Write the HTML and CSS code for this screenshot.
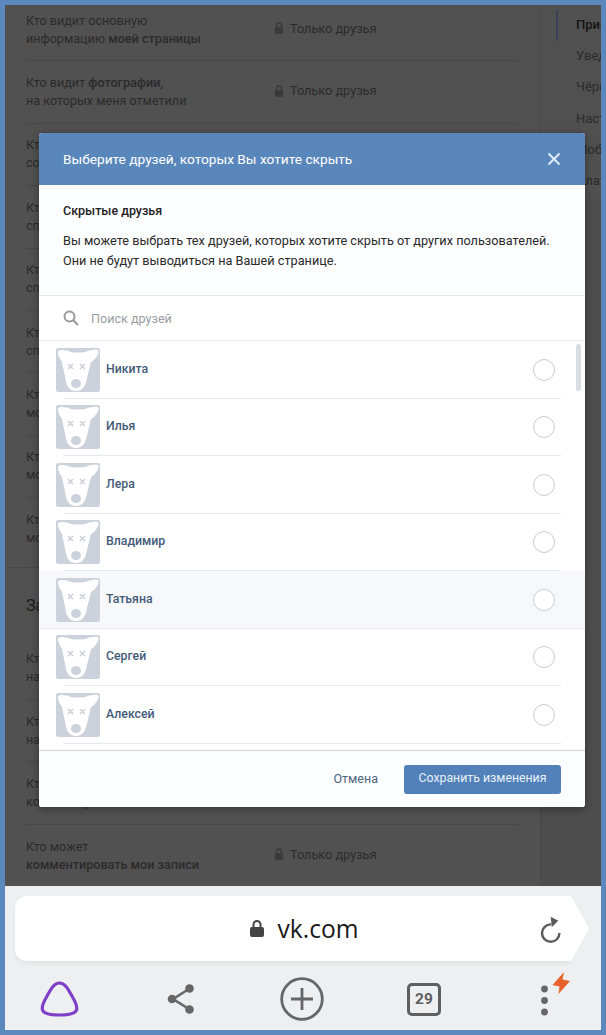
FILE: index.html
```html
<!DOCTYPE html>
<html lang="ru">
<head>
  <meta charset="UTF-8">
  <meta name="viewport" content="width=device-width, initial-scale=1">
  <title>Скрытые друзья</title>
  <link rel="stylesheet" href="styles.css">
</head>
<body>
  <svg class="defs" width="0" height="0">
    <symbol id="dog" viewBox="0 0 44 44">
      <rect width="44" height="44" rx="2" fill="#ccd2db"/>
      <path d="M2 6Q1 2 6 2Q11 2 15 4Q22 5 29 4Q34 1.500 40 1.500Q44 2 42 6Q40 11 35 14L31 30Q29 43 20 43Q11 43 9.500 31L6 14Q3 10 2 6Z" fill="#fff"/>
      <ellipse cx="20" cy="35.500" rx="5" ry="4.500" fill="#ccd2db"/>
      <path d="M12 16l5 5m0-5l-5 5M24 16l5 5m0-5l-5 5" stroke="#ccd2db" stroke-width="1.600"/>
    </symbol>
    <symbol id="lock" viewBox="0 0 12 14">
      <path d="M3 6V4a3 3 0 0 1 6 0v2" fill="none" stroke="currentColor" stroke-width="1.600"/>
      <rect x="1" y="6" width="10" height="8" rx="1.500" fill="currentColor"/>
    </symbol>
  </svg>

  <div class="frame">
    <div class="screen">
      <div class="settings">
        <div class="main">
          <div class="section section-first">
            <div class="row"><p>Кто видит основную<br>информацию <b>моей страницы</b></p><span class="value"><svg><use href="#lock"/></svg>Только друзья</span></div>
            <div class="row"><p>Кто видит <b>фотографии,</b><br>на которых меня отметили</p><span class="value"><svg><use href="#lock"/></svg>Только друзья</span></div>
            <div class="row"><p>Кто видит<br>сохранённые фотографии</p></div>
            <div class="row"><p>Кто видит<br>список моих групп</p></div>
            <div class="row"><p>Кто видит<br>список моих аудиозаписей</p></div>
            <div class="row"><p>Кто видит<br>список моих подарков</p></div>
            <div class="row"><p>Кто видит<br>мою геолокацию</p></div>
            <div class="row"><p>Кто видит<br>мои истории</p></div>
            <div class="row"><p>Кто видит<br>мои сообщества</p></div>
          </div>
          <div class="section section-second">
            <h3>Записи на странице</h3>
            <div class="row"><p>Кто видит<br>надписи на странице</p></div>
            <div class="row"><p>Кто может<br>написать на странице</p></div>
            <div class="row"><p>Кто видит<br>комментарии к записям</p></div>
            <div class="row"><p>Кто может<br><b>комментировать мои записи</b></p><span class="value"><svg><use href="#lock"/></svg>Только друзья</span></div>
          </div>
        </div>
        <div class="side">
          <ul>
            <li class="active">Приватность</li>
            <li>Уведомления</li>
            <li>Чёрный список</li>
            <li>Настройки</li>
            <li>Мобильные</li>
            <li>Платежи</li>
          </ul>
        </div>
      </div>

      <div class="modal">
        <div class="modal-head">
          <span>Выберите друзей, которых Вы хотите скрыть</span>
          <svg class="close" width="14" height="14" viewBox="0 0 14 14"><path d="M1.500 1.500l11 11m0-11l-11 11" stroke="#e4eef8" stroke-width="1.800"/></svg>
        </div>
        <div class="intro">
          <h4>Скрытые друзья</h4>
          <p>Вы можете выбрать тех друзей, которых хотите скрыть от других пользователей.<br>Они не будут выводиться на Вашей странице.</p>
        </div>
        <div class="search">
          <svg width="16" height="16" viewBox="0 0 16 16"><circle cx="6.500" cy="6.500" r="5" fill="none" stroke="#9a9a9a" stroke-width="2"/><path d="M10 10l5 5" stroke="#9a9a9a" stroke-width="2.200"/></svg>
          <span>Поиск друзей</span>
        </div>
        <div class="friends">
          <div class="friend"><svg class="ava"><use href="#dog"/></svg><span class="name">Никита</span><i class="radio"></i></div>
          <div class="friend"><svg class="ava"><use href="#dog"/></svg><span class="name">Илья</span><i class="radio"></i></div>
          <div class="friend"><svg class="ava"><use href="#dog"/></svg><span class="name">Лера</span><i class="radio"></i></div>
          <div class="friend"><svg class="ava"><use href="#dog"/></svg><span class="name">Владимир</span><i class="radio"></i></div>
          <div class="friend hover"><svg class="ava"><use href="#dog"/></svg><span class="name">Татьяна</span><i class="radio"></i></div>
          <div class="friend"><svg class="ava"><use href="#dog"/></svg><span class="name">Сергей</span><i class="radio"></i></div>
          <div class="friend"><svg class="ava"><use href="#dog"/></svg><span class="name">Алексей</span><i class="radio"></i></div>
          <div class="scroll"></div>
        </div>
        <div class="modal-foot">
          <span class="cancel">Отмена</span>
          <button type="button">Сохранить изменения</button>
        </div>
      </div>
    </div>

    <div class="browser">
      <div class="urlbar">
        <div class="url">
          <svg width="14" height="17" viewBox="0 0 14 17"><path d="M3.500 7V4.500a3.500 3.500 0 0 1 7 0V7" fill="none" stroke="#444" stroke-width="2"/><rect x="0" y="7" width="14" height="10" rx="2" fill="#444"/></svg>
          <span>vk.com</span>
        </div>
        <svg class="reload" width="22" height="28" viewBox="0 0 22 28"><path d="M11 9.400A8.700 8.700 0 1 0 19.400 18" fill="none" stroke="#5a5a5a" stroke-width="2.400"/><path d="M10.700 1.700l7.600 4-6.600 6.600z" fill="#5a5a5a"/></svg>
        <div class="tip"></div>
      </div>
      <div class="tools">
        <svg class="alice" width="40" height="36" viewBox="0 0 40 36"><path d="M19.500 2C14 2 11 8 6.500 16C3 22 1.500 26 2.500 29C4 33 11 34 19.500 34C28 34 35 33 36.500 29C37.500 26 36 22 32.500 16C28 8 25 2 19.500 2Z" fill="none" stroke="#7f3fc6" stroke-width="3.200"/></svg>
        <svg class="share" width="28" height="32" viewBox="0 0 28 32"><path d="M22 6L6 16l16 10" fill="none" stroke="#666" stroke-width="2.600"/><circle cx="22.500" cy="5.500" r="4.300" fill="#666"/><circle cx="5" cy="16" r="4.300" fill="#666"/><circle cx="22.500" cy="26.500" r="4.300" fill="#666"/></svg>
        <svg class="add" width="44" height="44" viewBox="0 0 44 44"><circle cx="22" cy="22" r="20.300" fill="none" stroke="#666" stroke-width="2.800"/><path d="M22 11v22M11 22h22" stroke="#666" stroke-width="2.800"/></svg>
        <div class="tabs">29</div>
        <svg class="more" width="31" height="46" viewBox="0 0 31 46"><circle cx="4.500" cy="18" r="3.400" fill="#666"/><circle cx="4.500" cy="29.500" r="3.400" fill="#666"/><circle cx="4.500" cy="41" r="3.400" fill="#666"/><path d="M24 1L12.500 14l7 1.500L18.500 23 30 10l-7.500-1.500z" fill="#e8622c"/></svg>
      </div>
    </div>
  </div>
</body>
</html>
```

FILE: styles.css
```css
* {
  box-sizing: border-box;
}
body {
  margin: 0;
  font-family: Roboto, 'Liberation Sans', sans-serif;
}
.defs {
  position: absolute;
}
.frame {
  width: 606px;
  height: 1035px;
  border: 5px solid #5b88bd;
  display: flex;
  flex-direction: column;
  background: #eeeff1;
}
.screen {
  position: relative;
  height: 882px;
  overflow: hidden;
  background: #4d4d4d;
}
.settings {
  display: flex;
  height: 100%;
}
.main {
  width: 536px;
  background: #515151;
  border-right: 1px solid #494949;
}
.section {
  padding: 0 21px;
}
.section-first {
  margin-top: -6px;
  padding-bottom: 6px;
}
.section-second {
  border-top: 1px solid #474747;
  padding-top: 28px;
}
.section-second h3 {
  margin: 0 0 22px;
  font-size: 16px;
  font-weight: 400;
  line-height: 20px;
  color: #1c1c1c;
}
.row {
  display: flex;
  align-items: center;
  height: 62.400px;
  border-bottom: 1px solid #484848;
}
.row:last-child {
  border-bottom: none;
}
.row p {
  margin: 0;
  width: 248px;
  font-size: 12.600px;
  line-height: 18px;
  color: #2b2b2b;
}
.row b {
  font-weight: 500;
}
.value {
  display: flex;
  align-items: center;
  gap: 6px;
  margin-top: -3px;
  font-size: 12.700px;
  color: #2b2b2b;
}
.value svg {
  width: 10px;
  height: 12px;
  color: #3a3a3a;
}
.side {
  width: 60px;
  height: 195px;
  background: #505050;
  padding-top: 5px;
  overflow: hidden;
  position: relative;
}
.side ul {
  list-style: none;
  margin: 0;
  padding: 0 0 0 35px;
  white-space: nowrap;
}
.side li {
  height: 31.200px;
  line-height: 30px;
  font-size: 13px;
  color: #2b2b2b;
}
.side li.active {
  color: #141414;
  font-weight: 500;
}
.side li.active::before {
  content: "";
  position: absolute;
  left: 15px;
  top: 5px;
  width: 2px;
  height: 31px;
  background: #3a4258;
}
.modal {
  position: absolute;
  left: 34px;
  top: 128px;
  width: 546px;
  height: 674px;
  background: #fff;
  border-radius: 3px;
  overflow: hidden;
  box-shadow: 0 2px 8px rgba(0,0,0,0.35);
  display: flex;
  flex-direction: column;
}
.modal-head {
  height: 52px;
  flex: none;
  background: #5a87bb;
  color: #fff;
  display: flex;
  align-items: center;
  justify-content: space-between;
  padding: 0 24px 1px;
  font-size: 13.700px;
}
.intro {
  height: 111px;
  flex: none;
  padding: 18px 24px 0;
  border-bottom: 1px solid #e7e8ec;
  background: #fcfdfe;
}
.intro h4 {
  margin: 0 0 12px;
  font-size: 12.500px;
  line-height: 16px;
  font-weight: 500;
  color: #222;
}
.intro p {
  margin: 0;
  font-size: 12.700px;
  line-height: 20px;
  color: #2a2a2a;
}
.search {
  height: 45px;
  flex: none;
  display: flex;
  align-items: center;
  gap: 12px;
  padding: 0 24px;
  border-bottom: 1px solid #e7e8ec;
  font-size: 12.600px;
  color: #9a9ea3;
}
.friends {
  position: relative;
  height: 410px;
  flex: none;
  overflow: hidden;
  border-bottom: 1px solid #d4d4d4;
}
.friend {
  display: flex;
  align-items: center;
  height: 57.500px;
  padding: 0 30px 0 17px;
  position: relative;
}
.friend::after {
  content: "";
  position: absolute;
  left: 25px;
  right: 24px;
  bottom: 0;
  border-bottom: 1px solid #e7e8ec;
}
.friend.hover {
  background: #f6f8fb;
}
.friend.hover::after {
  left: 0;
  right: 0;
}
.ava {
  width: 44px;
  height: 44px;
  flex: none;
}
.name {
  margin: -2px 0 0 6px;
  font-size: 12.300px;
  font-weight: 500;
  color: #445b78;
  flex: 1;
}
.radio {
  width: 22px;
  height: 22px;
  border-radius: 50%;
  border: 1px solid #c9ccd1;
  background: #fff;
}
.scroll {
  position: absolute;
  right: 4px;
  top: 3px;
  width: 5px;
  height: 47px;
  border-radius: 3px;
  background: #d8dce3;
}
.modal-foot {
  flex: 1;
  display: flex;
  align-items: center;
  justify-content: flex-end;
  gap: 26px;
  padding: 0 24px;
  background: #fcfdfe;
}
.cancel {
  margin-top: -2px;
  font-size: 12.500px;
  color: #4d6580;
}
.modal-foot button {
  width: 157px;
  height: 29px;
  padding: 0 0 2px;
  border: none;
  border-radius: 3px;
  background: #5181b8;
  color: #e9f1fa;
  font-family: inherit;
  font-size: 12.300px;
}
.browser {
  flex: 1;
  padding: 10px 0 0 10px;
}
.urlbar {
  position: relative;
  width: 555px;
  height: 65px;
  background: #fff;
  border-radius: 12px 0 0 12px;
  box-shadow: 0 3px 4px rgba(0,0,0,0.05);
}
.tip {
  position: absolute;
  left: 555px;
  top: 0;
  width: 19px;
  height: 65px;
  background: #fff;
  clip-path: polygon(0 0, 5% 0, 100% 50%, 5% 100%, 0 100%);
}
.url {
  display: flex;
  align-items: center;
  justify-content: center;
  height: 100%;
  gap: 13px;
  padding-left: 24px;
  font-family: 'Open Sans', 'Noto Sans', sans-serif;
  font-size: 24.600px;
  color: #1a1a1a;
}
.reload {
  position: absolute;
  right: 8px;
  top: 19px;
}
.tools {
  display: flex;
  align-items: center;
  height: 62px;
  margin-top: 7px;
  padding-left: 25px;
}
.share {
  margin-left: 87px;
}
.add {
  margin-left: 85px;
}
.tabs {
  width: 34px;
  height: 33px;
  margin-left: 83px;
  border: 3px solid #5f5f5f;
  border-radius: 5px;
  display: flex;
  align-items: center;
  justify-content: center;
  font-size: 15.500px;
  font-weight: 700;
  color: #5f5f5f;
}
.more {
  margin: 0 0 10px 99px;
}
```
